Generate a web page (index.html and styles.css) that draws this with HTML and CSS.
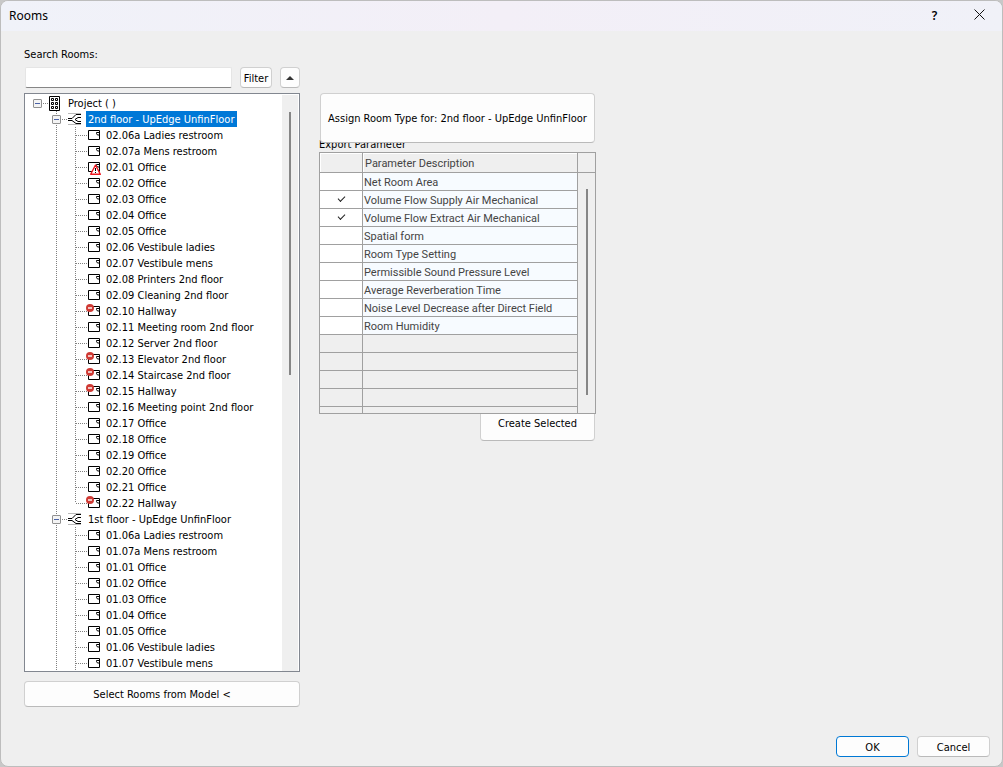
FILE: index.html
```html
<!DOCTYPE html>
<html lang="en">
<head>
    <meta charset="utf-8">
    <meta name="viewport" content="width=device-width, initial-scale=1.0">
    <title>Rooms</title>
    <link rel="stylesheet" href="styles.css">
</head>
<body>
    <!-- icons -->
    <svg class="sprite" aria-hidden="true">
        <symbol id="building" viewBox="0 0 11 15">
            <path d="M.5.5h10v14H.5z" fill="#fff" stroke="#000"/>
            <path d="M2.5 2.5h2v2h-2zM6.5 2.5h2v2h-2zM2.5 6.5h2v2h-2zM6.5 6.5h2v2h-2zM2.5 10.5h2v2h-2zM6.5 10.5h2v2h-2z" fill="none" stroke="#000"/>
        </symbol>
        <symbol id="floor" viewBox="0 0 14 12">
            <path d="M0 .5h13M0 11.5h13" stroke="#bbb"/>
            <path d="M0 5.5h4l4-4h5M0 7.5h4l4 3h5M13 4.5h-3L7 6.5l3 2h3" fill="none" stroke="#000"/>
        </symbol>
        <symbol id="room" viewBox="0 0 14 14">
            <path d="M1.5 2.5h11v9h-11z" fill="#fff" stroke="#000"/>
            <path d="M12 4.5H9.5v1l1 1.5H12" fill="none" stroke="#000"/>
        </symbol>
        <symbol id="warn" viewBox="0 0 11 11">
            <path d="M5.5 1L10.3 10.3H.7z" fill="#fff" stroke="#f01820" stroke-width="1.4" stroke-linejoin="round"/>
            <path d="M5.5 4v3M5.5 8v1" stroke="#000"/>
        </symbol>
        <symbol id="stop" viewBox="0 0 8 8">
            <circle cx="4" cy="4" r="4" fill="#cf3a34"/>
            <path d="M2 4h4" stroke="#fff" stroke-width="1.4"/>
        </symbol>
    </svg>

    <div class="window">
        <header class="titleBar">
            <h1>Rooms</h1>
            <button class="titleBtn" type="button">?</button>
            <button class="titleBtn" type="button" aria-label="Close">
                <svg width="11" height="11" viewBox="0 0 11 11"><path d="M.5.5l10 10M10.5.5l-10 10" stroke="#111"/></svg>
            </button>
        </header>

        <main class="content">
            <!-- search and room tree -->
            <section class="roomPanel">
                <label class="searchLabel" for="search">Search Rooms:</label>
                <div class="searchRow">
                    <input id="search" type="text">
                    <button class="btn" type="button">Filter</button>
                    <button class="btn collapseBtn" type="button" aria-label="Collapse"><span class="arrowUp"></span></button>
                </div>

                <div class="treeBox">
                    <div class="tree">
                        <div class="row root"><span class="expander"></span><svg class="buildingIcon"><use href="#building"/></svg><span class="name">Project ( )</span></div>
                        <ul class="floors">
                            <li>
                                <div class="row floor"><span class="expander"></span><svg class="floorIcon"><use href="#floor"/></svg><span class="name selected">2nd floor - UpEdge UnfinFloor</span></div>
                                <ul class="rooms">
                                    <li class="row"><svg class="roomIcon"><use href="#room"/></svg>02.06a Ladies restroom</li>
                                    <li class="row"><svg class="roomIcon"><use href="#room"/></svg>02.07a Mens restroom</li>
                                    <li class="row"><svg class="roomIcon"><use href="#room"/></svg><svg class="warnBadge"><use href="#warn"/></svg>02.01 Office</li>
                                    <li class="row"><svg class="roomIcon"><use href="#room"/></svg>02.02 Office</li>
                                    <li class="row"><svg class="roomIcon"><use href="#room"/></svg>02.03 Office</li>
                                    <li class="row"><svg class="roomIcon"><use href="#room"/></svg>02.04 Office</li>
                                    <li class="row"><svg class="roomIcon"><use href="#room"/></svg>02.05 Office</li>
                                    <li class="row"><svg class="roomIcon"><use href="#room"/></svg>02.06 Vestibule ladies</li>
                                    <li class="row"><svg class="roomIcon"><use href="#room"/></svg>02.07 Vestibule mens</li>
                                    <li class="row"><svg class="roomIcon"><use href="#room"/></svg>02.08 Printers 2nd floor</li>
                                    <li class="row"><svg class="roomIcon"><use href="#room"/></svg>02.09 Cleaning 2nd floor</li>
                                    <li class="row"><svg class="roomIcon"><use href="#room"/></svg><svg class="stopBadge"><use href="#stop"/></svg>02.10 Hallway</li>
                                    <li class="row"><svg class="roomIcon"><use href="#room"/></svg>02.11 Meeting room 2nd floor</li>
                                    <li class="row"><svg class="roomIcon"><use href="#room"/></svg>02.12 Server 2nd floor</li>
                                    <li class="row"><svg class="roomIcon"><use href="#room"/></svg><svg class="stopBadge"><use href="#stop"/></svg>02.13 Elevator 2nd floor</li>
                                    <li class="row"><svg class="roomIcon"><use href="#room"/></svg><svg class="stopBadge"><use href="#stop"/></svg>02.14 Staircase 2nd floor</li>
                                    <li class="row"><svg class="roomIcon"><use href="#room"/></svg><svg class="stopBadge"><use href="#stop"/></svg>02.15 Hallway</li>
                                    <li class="row"><svg class="roomIcon"><use href="#room"/></svg>02.16 Meeting point 2nd floor</li>
                                    <li class="row"><svg class="roomIcon"><use href="#room"/></svg>02.17 Office</li>
                                    <li class="row"><svg class="roomIcon"><use href="#room"/></svg>02.18 Office</li>
                                    <li class="row"><svg class="roomIcon"><use href="#room"/></svg>02.19 Office</li>
                                    <li class="row"><svg class="roomIcon"><use href="#room"/></svg>02.20 Office</li>
                                    <li class="row"><svg class="roomIcon"><use href="#room"/></svg>02.21 Office</li>
                                    <li class="row"><svg class="roomIcon"><use href="#room"/></svg><svg class="stopBadge"><use href="#stop"/></svg>02.22 Hallway</li>
                                </ul>
                            </li>
                            <li>
                                <div class="row floor"><span class="expander"></span><svg class="floorIcon"><use href="#floor"/></svg><span class="name">1st floor - UpEdge UnfinFloor</span></div>
                                <ul class="rooms more">
                                    <li class="row"><svg class="roomIcon"><use href="#room"/></svg>01.06a Ladies restroom</li>
                                    <li class="row"><svg class="roomIcon"><use href="#room"/></svg>01.07a Mens restroom</li>
                                    <li class="row"><svg class="roomIcon"><use href="#room"/></svg>01.01 Office</li>
                                    <li class="row"><svg class="roomIcon"><use href="#room"/></svg>01.02 Office</li>
                                    <li class="row"><svg class="roomIcon"><use href="#room"/></svg>01.03 Office</li>
                                    <li class="row"><svg class="roomIcon"><use href="#room"/></svg>01.04 Office</li>
                                    <li class="row"><svg class="roomIcon"><use href="#room"/></svg>01.05 Office</li>
                                    <li class="row"><svg class="roomIcon"><use href="#room"/></svg>01.06 Vestibule ladies</li>
                                    <li class="row"><svg class="roomIcon"><use href="#room"/></svg>01.07 Vestibule mens</li>
                                </ul>
                            </li>
                        </ul>
                    </div>
                    <div class="track"><div class="thumb"></div></div>
                </div>

                <button class="btn selectBtn" type="button">Select Rooms from Model &lt;</button>
            </section>

            <!-- export parameters -->
            <section class="paramPanel">
                <button class="btn assignBtn" type="button">Assign Room Type for: 2nd floor - UpEdge UnfinFloor</button>
                <h2>Export Parameter</h2>
                <div class="grid">
                    <table>
                        <thead>
                            <tr><th class="checkCol"></th><th>Parameter Description</th></tr>
                        </thead>
                        <tbody>
                            <tr><td><input type="checkbox" id="p1"></td><td><label for="p1">Net Room Area</label></td></tr>
                            <tr><td><input type="checkbox" id="p2" checked></td><td><label for="p2">Volume Flow Supply Air Mechanical</label></td></tr>
                            <tr><td><input type="checkbox" id="p3" checked></td><td><label for="p3">Volume Flow Extract Air Mechanical</label></td></tr>
                            <tr><td><input type="checkbox" id="p4"></td><td><label for="p4">Spatial form</label></td></tr>
                            <tr><td><input type="checkbox" id="p5"></td><td><label for="p5">Room Type Setting</label></td></tr>
                            <tr><td><input type="checkbox" id="p6"></td><td><label for="p6">Permissible Sound Pressure Level</label></td></tr>
                            <tr><td><input type="checkbox" id="p7"></td><td><label for="p7">Average Reverberation Time</label></td></tr>
                            <tr><td><input type="checkbox" id="p8"></td><td><label for="p8">Noise Level Decrease after Direct Field</label></td></tr>
                            <tr><td><input type="checkbox" id="p9"></td><td><label for="p9">Room Humidity</label></td></tr>
                            <tr class="empty"><td></td><td></td></tr>
                            <tr class="empty"><td></td><td></td></tr>
                            <tr class="empty"><td></td><td></td></tr>
                            <tr class="empty"><td></td><td></td></tr>
                            <tr class="empty"><td></td><td></td></tr>
                        </tbody>
                    </table>
                    <div class="gridScroll"><div class="thumb"></div></div>
                </div>
                <button class="btn createBtn" type="button">Create Selected</button>
            </section>
        </main>

        <footer class="footer">
            <button class="btn okBtn" type="button">OK</button>
            <button class="btn" type="button">Cancel</button>
        </footer>
    </div>
</body>
</html>
```
FILE: styles.css
```css
* {
    box-sizing: border-box;
}

body {
    margin: 0;
    background: #c8c8c8;
    color: #000;
    font: 11px/16px "DejaVu Sans Condensed", "Noto Sans", sans-serif;
}

ul {
    list-style: none;
    margin: 0;
    padding: 0;
}

button, input {
    font: inherit;
    color: inherit;
}

.sprite {
    position: absolute;
    width: 0;
    height: 0;
}

.window {
    display: flex;
    flex-direction: column;
    height: 100vh;
    min-height: 560px;
    border: 1px solid #bdbdbd;
    border-radius: 8px;
    overflow: hidden;
    background: #efefef;
}

/* title bar */
.titleBar {
    display: flex;
    align-items: center;
    flex: none;
    height: 30px;
    padding-left: 8px;
    background: linear-gradient(90deg, #f0f2f9, #f3eff7 50%, #f0f1f8);
    font: 12px/16px "Noto Sans", "Open Sans", sans-serif;
}

.titleBar h1 {
    flex: 1;
    margin: 0;
    font: inherit;
}

.titleBtn {
    width: 45px;
    height: 30px;
    padding: 0;
    border: 0;
    background: none;
    font-weight: 600;
}

.content {
    display: flex;
    flex: 1;
    min-height: 0;
    gap: 19px;
    padding: 15px 23px 0;
}

.btn {
    padding: 2px 0 0;
    border: 1px solid #d0d0d0;
    border-bottom-color: #bababa;
    border-radius: 4px;
    background: #fdfdfd;
}

/* left side */
.roomPanel {
    display: flex;
    flex-direction: column;
    width: 276px;
}

.searchLabel {
    padding-top: 1px;
}

.searchRow {
    display: grid;
    grid-template-columns: 1fr 32px 20px;
    gap: 8px;
    flex: none;
    height: 21px;
    margin: 4px 0 5px;
    padding-left: 1px;
}

.searchRow input {
    min-width: 0;
    padding: 0 4px;
    border: 1px solid #e5e5e5;
    border-bottom-color: #868686;
    border-radius: 2px;
    background: #fff;
}

.collapseBtn {
    display: flex;
    align-items: center;
    justify-content: center;
    padding: 0;
}

.arrowUp {
    border: 4px solid transparent;
    border-top: 0;
    border-bottom-color: #333;
}

.treeBox {
    display: flex;
    flex: 1;
    min-height: 0;
    border: 1px solid #828790;
    background: #fff;
}

.tree {
    flex: 1;
    padding: 1px 0 0 8px;
    overflow: hidden;
}

.row {
    display: flex;
    position: relative;
    height: 16px;
    line-height: 18px;
    white-space: nowrap;
}

.row svg,
.row .expander,
.row::before {
    align-self: center;
}

.expander {
    width: 9px;
    height: 9px;
    border: 1px solid #919191;
    border-radius: 1px;
    background: linear-gradient(#4b63a7, #4b63a7) center / 5px 1px no-repeat #f4f4f4;
}

.name {
    height: 16px;
    padding: 0 2px;
}

.selected {
    background: #0078d7;
    color: #fff;
}

/* dotted connectors */
.expander::after,
.rooms .row::before {
    content: "";
    height: 1px;
    background: repeating-linear-gradient(90deg, #808080 0 1px, transparent 1px 2px);
}

.expander::after {
    position: absolute;
    left: 10px;
    top: 8px;
    width: 6px;
}

.rooms .row::before {
    width: 11px;
}

.floors,
.rooms {
    margin-left: 19px;
    background: repeating-linear-gradient(#808080 0 1px, transparent 1px 2px) 4px 0 / 1px 100% no-repeat;
}

.rooms {
    background-size: 1px calc(100% - 8px);
}

.rooms.more {
    background-size: 1px 100%;
}

.rooms .row {
    padding-left: 5px;
}

.buildingIcon {
    width: 11px;
    height: 15px;
    margin: 0 6px 0 7px;
}

.floorIcon {
    width: 14px;
    height: 12px;
    margin: 0 4px 0 7px;
}

.roomIcon {
    width: 14px;
    height: 14px;
    margin-right: 5px;
}

.warnBadge,
.stopBadge {
    position: absolute;
}

.warnBadge {
    left: 19px;
    top: 5px;
    width: 11px;
    height: 11px;
}

.stopBadge {
    left: 15px;
    top: 1px;
    width: 8px;
    height: 8px;
}

.track {
    width: 17px;
    margin-top: 1px;
    border-right: 1px solid #fff;
    padding: 17px 7px 0;
    background: #efefef;
}

.thumb {
    width: 2px;
    height: 263px;
    background: #868686;
}

.selectBtn {
    flex: none;
    height: 26px;
    margin-top: 9px;
}

/* right side */
.paramPanel {
    display: flex;
    flex-direction: column;
    width: 277px;
    padding-top: 47px;
}

.assignBtn {
    position: relative;
    z-index: 1;
    flex: none;
    height: 50px;
    margin: 0 1px;
}

/* label sits half under the button */
.paramPanel h2 {
    margin: -6px 0 -1px;
    font: inherit;
}

.grid {
    display: flex;
    position: relative;
    flex: none;
    height: 262px;
    border: 1px solid #a0a0a0;
    overflow: hidden;
    background: #efefef;
    color: #444;
    font: 11px/15px Roboto, "Liberation Sans", sans-serif;
}

table {
    flex: 1;
    height: 272px;
    border-spacing: 0;
    table-layout: fixed;
}

th, td {
    height: 18px;
    padding: 2px 1px 0;
    border: 0 solid #a0a0a0;
    border-width: 0 1px 1px 0;
    text-align: left;
    font-weight: normal;
}

th {
    height: 20px;
    padding-left: 2px;
    box-shadow: inset 1px 1px #fff;
}

.checkCol {
    width: 43px;
}

td {
    background: #f7fbff;
}

td:first-child {
    padding-top: 0;
    background: #fff;
}

.empty td,
.empty td:first-child {
    background: #efefef;
}

td input {
    display: block;
    appearance: none;
    width: 8px;
    height: 8px;
    margin: 0 auto;
}

td input:checked::before {
    content: "";
    display: block;
    width: 6px;
    height: 3px;
    margin-left: 1px;
    border: solid #222;
    border-width: 0 0 1px 1px;
    transform: rotate(-45deg);
}

label {
    display: block;
}

.gridScroll {
    width: 17px;
    padding: 36px 0 0 8px;
    background: linear-gradient(#a0a0a0, #a0a0a0) 0 19px / 100% 1px no-repeat;
}

.gridScroll .thumb {
    height: 206px;
}

.createBtn {
    flex: none;
    align-self: flex-end;
    width: 115px;
    height: 36px;
    margin: -9px 1px 0 0;
}

/* bottom buttons */
.footer {
    display: flex;
    justify-content: flex-end;
    gap: 8px;
    padding: 29px 12px 9px;
}

.footer .btn {
    width: 73px;
    height: 21px;
}

.footer .okBtn {
    border-color: #0078d4;
}
```
